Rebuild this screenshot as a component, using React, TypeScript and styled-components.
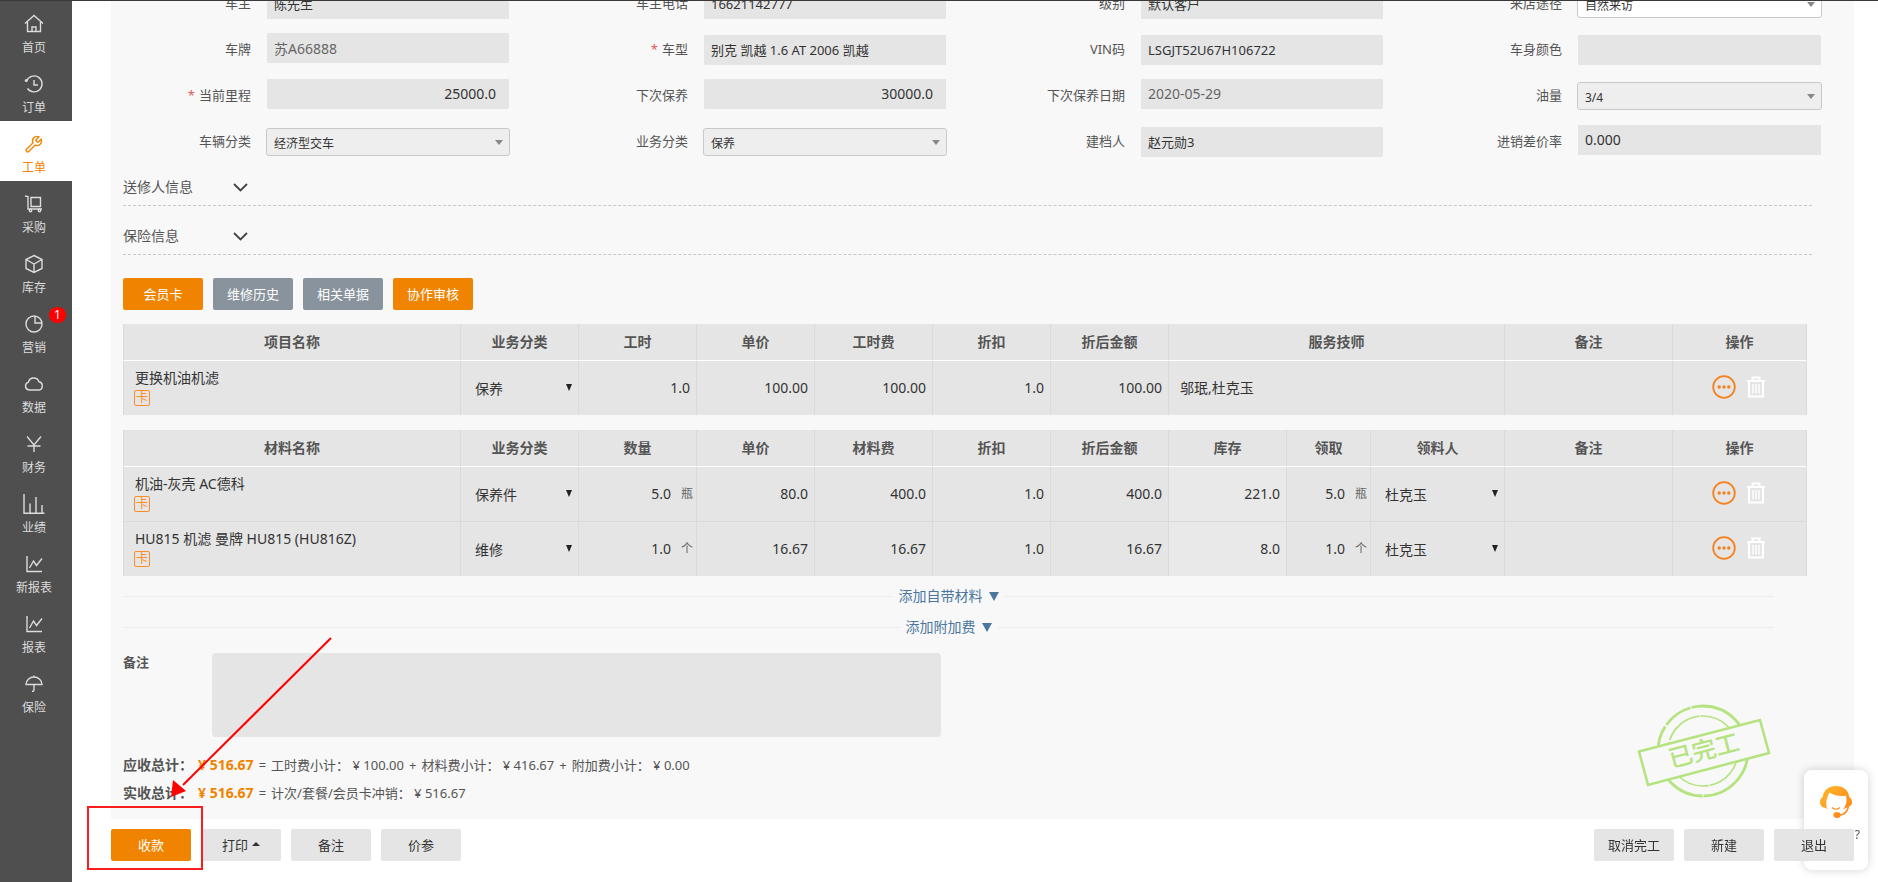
import React from "react";
import styled, { createGlobalStyle, css } from "styled-components";

const GlobalStyle = createGlobalStyle`
  *, *::before, *::after { box-sizing: border-box; }
  body {
    margin: 0;
    background: #fff;
    color: #333;
    font-family: "Noto Sans", "Noto Sans CJK SC", sans-serif;
    font-size: 14px;
    line-height: 20px;
  }
  button, input, select, textarea { font-family: inherit; color: inherit; }
`;

const Page = styled.div`
  display: flex;
  min-height: 100vh;
  border-top: 1px solid #3b3838;
`;

/* ---------- sidebar ---------- */

const Sidebar = styled.nav`
  flex: 0 0 72px;
  background: #4f4f4f;
`;

const NavLink = styled.a<{ $active?: boolean }>`
  position: relative;
  display: flex;
  flex-direction: column;
  align-items: center;
  height: 60px;
  padding: 13px 4px 0 0;
  font-size: 12px;
  line-height: 16px;
  text-decoration: none;
  color: ${(p) => (p.$active ? "#f08300" : "#dcdcdc")};
  background: ${(p) => (p.$active ? "#fff" : "transparent")};

  svg {
    width: 20px;
    height: 20px;
    margin-bottom: 6px;
    overflow: visible;
    fill: none;
    stroke: currentColor;
    stroke-width: 1.4;
  }
`;

const NavBadge = styled.span`
  position: absolute;
  top: 6px;
  right: 6px;
  width: 17px;
  height: 16px;
  border-radius: 8px;
  background: #f00;
  color: #fff;
  text-align: center;
`;

const navItems: { label: string; badge?: string; active?: boolean; icon: React.ReactNode }[] = [
  { label: "首页", icon: <path d="M1 9.5 10 1.5l9 8M3.5 8v9.5h13V8M8 17.500v-4.500h4v4.500" /> },
  { label: "订单", icon: <><path d="M2.600 7A8 8 0 1 1 3.500 14.500" /><path d="M10 6v5h4" /><circle cx="2.200" cy="6.500" r="0.800" fill="currentColor" /></> },
  {
    label: "工单",
    active: true,
    icon: <path transform="translate(1 1) scale(.75)" strokeWidth="1.8" d="M14.700 6.300a1 1 0 0 0 0 1.400l1.600 1.600a1 1 0 0 0 1.400 0l3.770-3.770a6 6 0 0 1-7.940 7.940l-8.500 8.500a2.120 2.120 0 0 1-3-3l8.500-8.500a6 6 0 0 1 7.940-7.940l-3.760 3.760z" />,
  },
  { label: "采购", icon: <><path d="M1 2l3 .5V15h14M7 3.500h9.500v9H7z" /><circle cx="6.500" cy="16.500" r="1.200" /><circle cx="15.500" cy="16.500" r="1.200" /></> },
  { label: "库存", icon: <path d="M10 1.500l8 4v9l-8 4-8-4v-9zM2 5.500l8 4.500 8-4.500M10 10v8.500" /> },
  { label: "营销", badge: "1", icon: <><circle cx="10" cy="10" r="8" /><path d="M11 2v7h7" /></> },
  { label: "数据", icon: <path d="M5 16a4 4 0 0 1-.6-7.800A5.500 5.500 0 0 1 15 7.800 4.200 4.200 0 0 1 15 16z" /> },
  { label: "财务", icon: <path d="M3 2.500l7 8.500 7-8.500M3.500 12h13M10 11v7" /> },
  { label: "业绩", icon: <path d="M0 0v19.300h20.500M6 19V9.500M12 19V3M18 19v-8" /> },
  { label: "新报表", icon: <path d="M3 2v15.500h15M5.500 14l4-7 3 4.500 5.500-7" /> },
  { label: "报表", icon: <path d="M3 2v15.500h15M5.500 14l4-7 3 4.500 5.500-7" /> },
  { label: "保险", icon: <path d="M2 10.500a8 7.500 0 0 1 16 0zM10 1.500V3M10 10.500V16q-.2 1.500-2 1.200" /> },
];

/* ---------- main area ---------- */

const Main = styled.main`
  flex: 1;
  min-width: 0;
  margin: 0 24px 0 39px;
`;

const Panel = styled.section`
  position: relative;
  overflow: hidden;
  padding-bottom: 12px;
  background: #f8f8f8;
`;

const FormGrid = styled.div`
  display: grid;
  grid-template-columns: 156fr 242fr 195fr 242fr 195fr 242fr 195fr 243fr;
  grid-auto-rows: 30px;
  row-gap: 16px;
  align-items: center;
  margin-top: -12px;
  padding-right: 33px;
`;

const FieldLabel = styled.label`
  padding: 0 16px 2px 0;
  text-align: right;
  font-size: 13px;
  color: #555;
`;

const Required = styled.span`
  margin-right: 4px;
  color: #e4595c;
`;

const FieldInput = styled.input<{ $raised?: boolean; $muted?: boolean; $number?: boolean; $small?: boolean }>`
  width: 100%;
  min-width: 0;
  height: 30px;
  margin: 0 0 ${(p) => (p.$raised ? 4 : 0)}px;
  padding: 0 ${(p) => (p.$number ? 13 : 7)}px 1px 7px;
  border: 0;
  border-radius: 1px;
  background: #e5e5e5;
  font-size: ${(p) => (p.$small ? 13 : 14)}px;
  text-align: ${(p) => (p.$number ? "right" : "left")};
  color: ${(p) => (p.$muted ? "#666" : "#333")};
  outline: 0;
`;

const SelectBox = styled.div`
  position: relative;
  margin: 0 -1px;

  &::after {
    content: "";
    position: absolute;
    top: 12px;
    right: 7px;
    border: 4px solid transparent;
    border-top: 5px solid #888;
    border-bottom: 0;
    pointer-events: none;
  }
`;

const FieldSelect = styled.select<{ $white?: boolean }>`
  appearance: none;
  display: block;
  width: 100%;
  height: 28px;
  padding: 2px 20px 0 7px;
  border: 1px solid #c9c9c9;
  border-radius: 3px;
  background: ${(p) => (p.$white ? "#fff" : "#eee")};
  font-size: 12px;
`;

type Field = {
  id: string;
  label: string;
  value: string;
  kind?: "select";
  required?: boolean;
  raised?: boolean;
  muted?: boolean;
  number?: boolean;
  small?: boolean;
  white?: boolean;
};

const fields: Field[] = [
  { id: "owner", label: "车主", value: "陈先生", small: true },
  { id: "phone", label: "车主电话", value: "16621142777", small: true },
  { id: "level", label: "级别", value: "默认客户", small: true },
  { id: "source", label: "来店途径", value: "自然来访", kind: "select", white: true },
  { id: "plate", label: "车牌", value: "苏A66888", raised: true, muted: true },
  { id: "model", label: "车型", value: "别克 凯越 1.6 AT 2006 凯越", required: true, small: true },
  { id: "vin", label: "VIN码", value: "LSGJT52U67H106722", small: true },
  { id: "color", label: "车身颜色", value: "" },
  { id: "mileage", label: "当前里程", value: "25000.0", required: true, raised: true, number: true },
  { id: "next", label: "下次保养", value: "30000.0", raised: true, number: true },
  { id: "nextDate", label: "下次保养日期", value: "2020-05-29", raised: true, muted: true },
  { id: "fuel", label: "油量", value: "3/4", kind: "select" },
  { id: "carType", label: "车辆分类", value: "经济型交车", kind: "select" },
  { id: "bizType", label: "业务分类", value: "保养", kind: "select" },
  { id: "creator", label: "建档人", value: "赵元勋3", small: true },
  { id: "margin", label: "进销差价率", value: "0.000", raised: true },
];

const Body = styled.div`
  padding: 0 47px 0 12px;
`;

const FoldHeader = styled.button`
  display: flex;
  align-items: center;
  width: calc(100% + 5px);
  margin: 20px -5px 0 0;
  padding: 0 0 8px;
  border: 0;
  border-bottom: 1px dashed #c8c8c8;
  background: none;
  font-size: 14px;
  line-height: 20px;
  color: #555;
  text-align: left;

  ${FormGrid} + ${Body} > &:first-child { margin-top: 20px; }
  span { width: 110px; }
  svg { fill: none; stroke: #444; stroke-width: 1.800; }
`;

const ButtonRow = styled.div`
  display: flex;
  gap: 10px;
  margin-top: 23px;
`;

const tones = { orange: "#f08300", slate: "#89939e", light: "#e5e5e5" };

const Button = styled.button<{ $tone: keyof typeof tones }>`
  display: flex;
  align-items: center;
  justify-content: center;
  gap: 4px;
  width: 80px;
  height: 32px;
  padding: 0 0 2px;
  border: 0;
  border-radius: 2px;
  background: ${(p) => tones[p.$tone]};
  color: ${(p) => (p.$tone === "light" ? "#333" : "#fff")};
  font-size: 13px;
`;

/* ---------- tables ---------- */

const Table = styled.table`
  width: 100%;
  margin-top: 15px;
  table-layout: fixed;
  border-collapse: separate;
  border-spacing: 0;
  background: #e5e5e5;

  ${ButtonRow} + & { margin-top: 14px; }
`;

const Th = styled.th<{ $w: number }>`
  width: ${(p) => p.$w}px;
  height: 37px;
  padding: 0;
  border-right: 1px solid #dadada;
  border-bottom: 1px solid #fff;
  color: #555;
  font-weight: 700;

  &:first-child { border-left: 1px solid #dadada; }
`;

const Td = styled.td<{ $number?: boolean; $light?: boolean }>`
  height: 55px;
  padding: 0 6px 0 11px;
  border-right: 1px solid #dadada;
  border-bottom: 1px solid #dadada;
  text-align: ${(p) => (p.$number ? "right" : "left")};
  ${(p) => p.$light && css`background: #e9e9e9;`}

  &:first-child { border-left: 1px solid #dadada; }
  tr:last-child > & { height: 54px; border-bottom: 0; }
`;

const ItemName = styled.div`
  margin-top: -2px;
  line-height: 20px;
`;

const CardTag = styled.span`
  display: block;
  width: 16px;
  height: 16px;
  margin: 2px 0 0 -1px;
  border: 1px solid #ff8c26;
  border-radius: 2px;
  color: #ff8c26;
  font-size: 12px;
  line-height: 14px;
  text-align: center;
`;

const CellSelectBox = styled.div`
  position: relative;

  &::after {
    content: "";
    position: absolute;
    top: 6px;
    right: 0;
    border: 3px solid transparent;
    border-top: 7px solid #222;
    border-bottom: 0;
    pointer-events: none;
  }
`;

const CellSelect = styled.select`
  appearance: none;
  display: block;
  width: 100%;
  height: 20px;
  padding: 0 10px 0 3px;
  border: 0;
  background: transparent;
  font-size: 14px;
`;

const Quantity = styled.div`
  display: flex;
  justify-content: flex-end;
  gap: 10px;
  margin-right: -3px;
`;

const Unit = styled.span`
  font-size: 12px;
  color: #666;
`;

const Actions = styled.div`
  display: flex;
  justify-content: center;
  gap: 10px;
  padding: 0 6px 2px 0;
`;

const IconButton = styled.button`
  display: flex;
  align-items: center;
  padding: 0;
  border: 0;
  background: none;
`;

function CategorySelect({ value, label }: { value: string; label: string }) {
  return (
    <CellSelectBox>
      <CellSelect aria-label={label} defaultValue={value}>
        <option>{value}</option>
      </CellSelect>
    </CellSelectBox>
  );
}

function RowActions() {
  return (
    <Actions>
      <IconButton aria-label="更多">
        <svg width="24" height="24" viewBox="0 0 24 24">
          <circle cx="12" cy="12" r="10.800" fill="none" stroke="#f5821f" strokeWidth="1.800" />
          {[7.2, 12, 16.8].map((x) => (
            <circle key={x} cx={x} cy="12" r="1.700" fill="#f5821f" />
          ))}
        </svg>
      </IconButton>
      <IconButton aria-label="删除">
        <svg width="20" height="22" viewBox="0 0 20 22" fill="none" stroke="#fff" strokeWidth="2">
          <path d="M1 5h18M6.500 4.500V1.500h7v3M3 5v15.500h14V5" />
          <path d="M7 8v9.500M10 8v9.500M13 8v9.500" strokeWidth="1.400" />
        </svg>
      </IconButton>
    </Actions>
  );
}

function NameCell({ name }: { name: string }) {
  return (
    <Td>
      <ItemName>{name}</ItemName>
      <CardTag>卡</CardTag>
    </Td>
  );
}

const projectColumns: [string, number][] = [
  ["项目名称", 338], ["业务分类", 118], ["工时", 118], ["单价", 118], ["工时费", 118],
  ["折扣", 118], ["折后金额", 118], ["服务技师", 336], ["备注", 168], ["操作", 134],
];

const materialColumns: [string, number][] = [
  ["材料名称", 338], ["业务分类", 118], ["数量", 118], ["单价", 118], ["材料费", 118], ["折扣", 118],
  ["折后金额", 118], ["库存", 118], ["领取", 84], ["领料人", 134], ["备注", 168], ["操作", 134],
];

const materials = [
  { name: "机油-灰壳 AC德科", type: "保养件", qty: "5.0", unit: "瓶", price: "80.0", fee: "400.0", off: "1.0", total: "400.0", stock: "221.0", who: "杜克玉" },
  { name: "HU815 机滤 曼牌 HU815 (HU816Z)", type: "维修", qty: "1.0", unit: "个", price: "16.67", fee: "16.67", off: "1.0", total: "16.67", stock: "8.0", who: "杜克玉" },
];

function HeadRow({ columns }: { columns: [string, number][] }) {
  return (
    <thead>
      <tr>
        {columns.map(([name, w]) => (
          <Th key={name} $w={w}>{name}</Th>
        ))}
      </tr>
    </thead>
  );
}

/* ---------- below the tables ---------- */

const AddLine = styled.div`
  display: flex;
  align-items: center;
  gap: 6px;
  margin: 10px 33px 11px 0;

  & + & { margin-top: 0; margin-bottom: 16px; }
  &::before, &::after {
    content: "";
    flex: 1;
    height: 1px;
    background: #ececec;
  }
`;

const AddButton = styled.button`
  display: flex;
  align-items: center;
  gap: 6px;
  padding: 0;
  border: 0;
  background: none;
  color: #4b769f;
  font-size: 14px;
  line-height: 20px;

  &::after {
    content: "";
    border: 5px solid transparent;
    border-top: 9px solid #4b769f;
    border-bottom: 0;
  }
`;

const MemoRow = styled.div`
  display: flex;
  align-items: flex-start;
`;

const MemoLabel = styled.label`
  width: 89px;
  color: #555;
  font-size: 13px;
  line-height: 18px;
  font-weight: 700;
`;

const Memo = styled.textarea`
  display: block;
  flex: 0 1 729px;
  height: 84px;
  border: 0;
  border-radius: 4px;
  background: #e5e5e5;
  resize: none;
  outline: 0;
`;

const Totals = styled.div`
  margin-top: 14px;
  color: #555;
  font-size: 13px;
  line-height: 28px;
`;

const TotalLine = styled.div`
  display: flex;
  align-items: baseline;
  gap: 5px;
  height: 28px;
`;

const TotalName = styled.b`
  font-size: 14px;
`;

const Amount = styled.b`
  font-size: 14px;
  color: #f08300;
`;

const Stamp = styled.svg`
  position: absolute;
  right: 82px;
  bottom: 18px;
  width: 140px;
  height: 100px;
`;

/* ---------- footer ---------- */

const Footer = styled.footer`
  display: flex;
  justify-content: space-between;
  padding: 10px 0 20px;
`;

const FooterGroup = styled.div`
  position: relative;
  z-index: 2;
  display: flex;
  gap: 10px;
`;

const Caret = styled.span`
  border: 4px solid transparent;
  border-bottom: 4px solid #333;
  border-top: 0;
`;

const Highlight = styled.div`
  position: relative;

  &::after {
    content: "";
    position: absolute;
    inset: -23px -12px -9px -24px;
    border: 2px solid #fa1e1e;
    pointer-events: none;
  }
`;

const PointerArrow = styled.svg`
  position: absolute;
  left: 60px;
  bottom: 63px;
  width: 162px;
  height: 162px;
  pointer-events: none;
`;

const Helper = styled.aside`
  position: fixed;
  right: 10px;
  bottom: 12px;
  z-index: 1;
  display: flex;
  flex-direction: column;
  align-items: flex-end;
  width: 64px;
  height: 100px;
  padding: 16px 8px 0 0;
  border-radius: 8px;
  background: #fff;
  box-shadow: 0 0 10px rgba(0, 0, 0, 0.18);
  font-size: 12px;
  line-height: 16px;
  color: #555;

  svg { flex: none; margin: 0 8px 9px 0; }
`;

export default function App() {
  return (
    <>
      <GlobalStyle />
      <Page>
        <Sidebar>
          {navItems.map((item) => (
            <NavLink key={item.label} href="#" $active={item.active}>
              <svg viewBox="0 0 20 20">{item.icon}</svg>
              {item.label}
              {item.badge && <NavBadge>{item.badge}</NavBadge>}
            </NavLink>
          ))}
        </Sidebar>
        <Main>
          <Panel>
            <FormGrid>
              {fields.map((f) => (
                <React.Fragment key={f.id}>
                  <FieldLabel htmlFor={f.id}>
                    {f.required && <Required>*</Required>}
                    {f.label}
                  </FieldLabel>
                  {f.kind === "select" ? (
                    <SelectBox>
                      <FieldSelect id={f.id} $white={f.white} defaultValue={f.value}>
                        <option>{f.value}</option>
                      </FieldSelect>
                    </SelectBox>
                  ) : (
                    <FieldInput
                      id={f.id}
                      readOnly
                      value={f.value}
                      $raised={f.raised}
                      $muted={f.muted}
                      $number={f.number}
                      $small={f.small}
                    />
                  )}
                </React.Fragment>
              ))}
            </FormGrid>
            <Body>
              {["送修人信息", "保险信息"].map((title) => (
                <FoldHeader key={title}>
                  <span>{title}</span>
                  <svg width="15" height="9" viewBox="0 0 15 9">
                    <path d="M1 1l6.500 6.500L14 1" />
                  </svg>
                </FoldHeader>
              ))}
              <ButtonRow>
                <Button $tone="orange">会员卡</Button>
                <Button $tone="slate">维修历史</Button>
                <Button $tone="slate">相关单据</Button>
                <Button $tone="orange">协作审核</Button>
              </ButtonRow>

              <Table>
                <HeadRow columns={projectColumns} />
                <tbody>
                  <tr>
                    <NameCell name="更换机油机滤" />
                    <Td><CategorySelect label="业务分类" value="保养" /></Td>
                    <Td $number>1.0</Td>
                    <Td $number>100.00</Td>
                    <Td $number>100.00</Td>
                    <Td $number>1.0</Td>
                    <Td $number>100.00</Td>
                    <Td>邬珉,杜克玉</Td>
                    <Td />
                    <Td><RowActions /></Td>
                  </tr>
                </tbody>
              </Table>

              <Table>
                <HeadRow columns={materialColumns} />
                <tbody>
                  {materials.map((m) => (
                    <tr key={m.name}>
                      <NameCell name={m.name} />
                      <Td><CategorySelect label="业务分类" value={m.type} /></Td>
                      <Td $number><Quantity>{m.qty}<Unit>{m.unit}</Unit></Quantity></Td>
                      <Td $number>{m.price}</Td>
                      <Td $number>{m.fee}</Td>
                      <Td $number>{m.off}</Td>
                      <Td $number>{m.total}</Td>
                      <Td $number $light>{m.stock}</Td>
                      <Td $number><Quantity>{m.qty}<Unit>{m.unit}</Unit></Quantity></Td>
                      <Td><CategorySelect label="领料人" value={m.who} /></Td>
                      <Td />
                      <Td><RowActions /></Td>
                    </tr>
                  ))}
                </tbody>
              </Table>

              <AddLine><AddButton>添加自带材料</AddButton></AddLine>
              <AddLine><AddButton>添加附加费</AddButton></AddLine>

              <MemoRow>
                <MemoLabel htmlFor="memo">备注</MemoLabel>
                <Memo id="memo" readOnly />
              </MemoRow>

              <Totals>
                <TotalLine>
                  <TotalName>应收总计：</TotalName>
                  <Amount>¥ 516.67</Amount>
                  <span>=</span>
                  <span>工时费小计： ¥ 100.00</span>
                  <span>+</span>
                  <span>材料费小计： ¥ 416.67</span>
                  <span>+</span>
                  <span>附加费小计： ¥ 0.00</span>
                </TotalLine>
                <TotalLine>
                  <TotalName>实收总计：</TotalName>
                  <Amount>¥ 516.67</Amount>
                  <span>=</span>
                  <span>计次/套餐/会员卡冲销： ¥ 516.67</span>
                </TotalLine>
              </Totals>
            </Body>
            <Stamp viewBox="0 0 140 100" fill="none" stroke="#b5e37f">
              <circle cx="71" cy="50" r="45" strokeWidth="2.800" strokeDasharray="70 1 96 2 30 1 83" />
              <circle cx="71" cy="50" r="35" strokeWidth="1.700" strokeDasharray="48 1 70 2 40 1 60" />
              <path d="M7 50.500 128 19l9 33L16 84z" fill="#f8f8f8" strokeWidth="2.600" />
              <text
                x="72"
                y="58"
                transform="rotate(-14.500 72 50)"
                textAnchor="middle"
                fontSize="24"
                fontWeight="500"
                fill="#b5e37f"
                stroke="none"
              >
                已完工
              </text>
            </Stamp>
          </Panel>

          <Footer>
            <FooterGroup>
              <Highlight>
                <Button $tone="orange">收款</Button>
                <PointerArrow viewBox="0 0 162 162">
                  <path d="M160 2 12 149" stroke="#f00" strokeWidth="2" />
                  <path d="M0 161 2 144l13 11z" fill="#f00" />
                </PointerArrow>
              </Highlight>
              <Button $tone="light">打印<Caret /></Button>
              <Button $tone="light">备注</Button>
              <Button $tone="light">价参</Button>
            </FooterGroup>
            <FooterGroup>
              <Button $tone="light">取消完工</Button>
              <Button $tone="light">新建</Button>
              <Button $tone="light">退出</Button>
            </FooterGroup>
          </Footer>
        </Main>
      </Page>
      <Helper>
        <svg width="32" height="32" viewBox="0 0 32 32">
          <defs>
            <linearGradient id="hair" x1="0" y1="0" x2="1" y2="1">
              <stop offset="0" stopColor="#ffb92e" />
              <stop offset="1" stopColor="#ff7e14" />
            </linearGradient>
          </defs>
          <path
            fill="url(#hair)"
            d="M16 0C8.500 0 3.300 4.500 2.700 11 .9 12 0 13.700 0 16c0 3 1.800 5.500 5 5.800.8 0 1.300.8 2.500 1.700C5 18 6.500 12 9.500 6.500c4 2.800 10 4.300 16.500 3.200 1.200 5 .2 10-3 14 1.200-.5 2-1.300 3-1.900 .6 0 .9 0 1.400-.2-1.400 4-3.800 6-6.700 6.600-.6-1.400-2-2.200-3.700-2.200-2.200 0-3.700 1.300-3.700 3s1.500 3 3.700 3c1.900 0 3.300-1 3.700-2.300 4.600-.6 7.500-4 8.500-9.200 1.800-1 2.800-2.500 2.800-4.500 0-2.300-1-4-2.700-5C28.700 4.500 23.500 0 16 0z"
          />
          <path d="M12 21.500q4 3.500 8 0" fill="none" stroke="#ff8c1a" strokeWidth="1.200" />
        </svg>
        ?
      </Helper>
    </>
  );
}
